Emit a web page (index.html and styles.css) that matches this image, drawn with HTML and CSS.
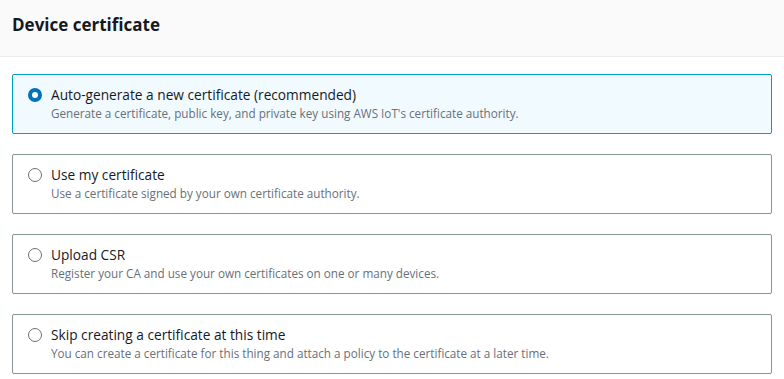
FILE: index.html
```html
<!DOCTYPE html>
<html>
<head>
    <title>Device certificate</title>
    <link rel="stylesheet" href="styles.css">
</head>
<body>
    <div class="header">
        <h2>Device certificate</h2>
    </div>

    <div class="options">
        <label class="option selected">
            <span class="radio"></span>
            <span class="text">
                <span class="title">Auto-generate a new certificate (recommended)</span>
                <span class="desc">Generate a certificate, public key, and private key using AWS IoT's certificate authority.</span>
            </span>
        </label>
        <label class="option">
            <span class="radio"></span>
            <span class="text">
                <span class="title">Use my certificate</span>
                <span class="desc">Use a certificate signed by your own certificate authority.</span>
            </span>
        </label>
        <label class="option">
            <span class="radio"></span>
            <span class="text">
                <span class="title">Upload CSR</span>
                <span class="desc">Register your CA and use your own certificates on one or many devices.</span>
            </span>
        </label>
        <label class="option">
            <span class="radio"></span>
            <span class="text">
                <span class="title">Skip creating a certificate at this time</span>
                <span class="desc">You can create a certificate for this thing and attach a policy to the certificate at a later time.</span>
            </span>
        </label>
    </div>
</body>
</html>
```

FILE: styles.css
```css
body {
    margin: 0;
    font-family: "Open Sans", Arial, sans-serif;
    color: #16191f;
    background: white;
}
.header {
    background: #fafafa;
    border-bottom: 1px solid #eaeded;
    height: 56px;
    padding: 0 12px;
    display: flex;
    align-items: center;
}
.header h2 {
    margin: 0 0 8px 0;
    font-size: 17px;
    font-weight: 700;
    color: #16191f;
}
.options {
    display: flex;
    flex-direction: column;
    gap: 20px;
    padding: 17px 12px 0 12px;
}
.option {
    display: flex;
    align-items: flex-start;
    gap: 9px;
    height: 60px;
    box-sizing: border-box;
    border: 1px solid #879596;
    border-radius: 2px;
    padding: 11px 15px;
    background: white;
}
.option.selected {
    border-color: #00a1c9;
    background: #f1faff;
}
.radio {
    flex: none;
    width: 14px;
    height: 14px;
    box-sizing: border-box;
    border: 1px solid #687078;
    border-radius: 50%;
    background: white;
    margin-top: 2px;
}
.selected .radio {
    border: 4px solid #0073bb;
}
.text {
    display: flex;
    flex-direction: column;
}
.title {
    font-size: 13.7px;
    line-height: 18px;
    color: #16191f;
}
.desc {
    font-size: 11.7px;
    line-height: 18px;
    color: #687078;
}
```
